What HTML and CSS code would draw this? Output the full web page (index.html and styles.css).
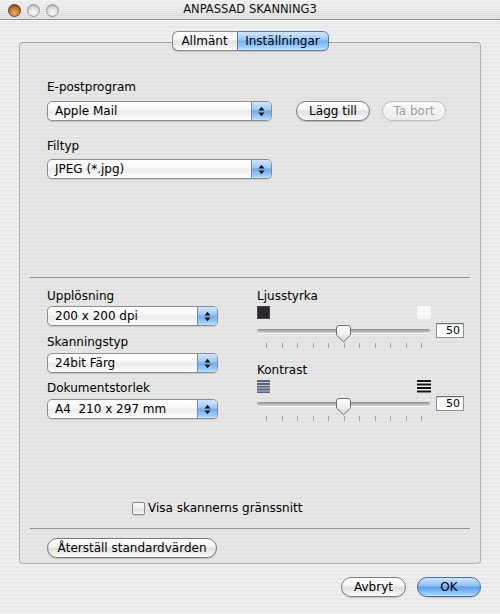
FILE: index.html
```html
<!DOCTYPE html>
<html>
<head>
<meta charset="utf-8">
<link rel="stylesheet" href="styles.css">
</head>
<body>
<div class="titlebar">
  <div class="lights">
    <span class="light close"></span>
    <span class="light"></span>
    <span class="light"></span>
  </div>
  <div class="title">ANPASSAD SKANNING3</div>
  <div></div>
</div>
<div class="main">
  <div class="tabs">
    <span class="tab first">Allmänt</span>
    <span class="tab sel">Inställningar</span>
  </div>
  <div class="box">
    <section class="top">
      <div class="label">E-postprogram</div>
      <div class="row">
        <div class="popup wide"><span class="txt">Apple Mail</span><span class="arrows"><svg width="7" height="11" viewBox="0 0 7 11"><path d="M0.5 4.5 L3.5 0.8 L6.5 4.5 Z M0.5 6.5 L3.5 10.2 L6.5 6.5 Z" fill="#111"/></svg></span></div>
        <button class="btn add">Lägg till</button>
        <button class="btn remove" disabled>Ta bort</button>
      </div>
      <div class="label filtyp">Filtyp</div>
      <div class="popup wide second"><span class="txt">JPEG (*.jpg)</span><span class="arrows"><svg width="7" height="11" viewBox="0 0 7 11"><path d="M0.5 4.5 L3.5 0.8 L6.5 4.5 Z M0.5 6.5 L3.5 10.2 L6.5 6.5 Z" fill="#111"/></svg></span></div>
    </section>
    <hr class="sep sep1">
    <section class="lower">
      <div class="col left">
        <div class="label">Upplösning</div>
        <div class="popup p1"><span class="txt">200 x 200 dpi</span><span class="arrows"><svg width="7" height="11" viewBox="0 0 7 11"><path d="M0.5 4.5 L3.5 0.8 L6.5 4.5 Z M0.5 6.5 L3.5 10.2 L6.5 6.5 Z" fill="#111"/></svg></span></div>
        <div class="label l2">Skanningstyp</div>
        <div class="popup p2"><span class="txt">24bit Färg</span><span class="arrows"><svg width="7" height="11" viewBox="0 0 7 11"><path d="M0.5 4.5 L3.5 0.8 L6.5 4.5 Z M0.5 6.5 L3.5 10.2 L6.5 6.5 Z" fill="#111"/></svg></span></div>
        <div class="label l3">Dokumentstorlek</div>
        <div class="popup p2"><span class="txt">A4&nbsp; 210 x 297 mm</span><span class="arrows"><svg width="7" height="11" viewBox="0 0 7 11"><path d="M0.5 4.5 L3.5 0.8 L6.5 4.5 Z M0.5 6.5 L3.5 10.2 L6.5 6.5 Z" fill="#111"/></svg></span></div>
      </div>
      <div class="col right">
        <div class="label">Ljusstyrka</div>
        <div class="icons">
          <span class="sq dark"></span>
          <span class="sq light-sq"></span>
        </div>
        <div class="srow s1">
          <div class="slider">
            <div class="track"></div>
            <svg class="thumb" width="17" height="19" viewBox="0 0 17 19"><defs><linearGradient id="tg" x1="0" y1="0" x2="0" y2="1"><stop offset="0" stop-color="#ffffff"/><stop offset="0.6" stop-color="#ececec"/><stop offset="1" stop-color="#d8d8d8"/></linearGradient></defs><path d="M1.5 4 Q1.5 1.5 4 1.5 H13 Q15.5 1.5 15.5 4 V11 L8.5 17.8 L1.5 11 Z" fill="url(#tg)" stroke="#6f6f6f" stroke-width="1"/></svg>
          </div>
          <div class="val">50</div>
        </div>
        <div class="ticks"><i></i><i></i><i></i><i></i><i></i><i></i><i></i><i></i><i></i><i></i><i></i></div>
        <div class="label l4">Kontrast</div>
        <div class="icons">
          <svg class="ci" width="13" height="13" viewBox="0 0 13 13"><rect width="13" height="13" fill="#c3c9d3"/><rect y="0" width="13" height="2" fill="#56647e"/><rect y="3" width="13" height="2" fill="#56647e"/><rect y="6" width="13" height="1.5" fill="#56647e"/><rect y="8.5" width="13" height="2" fill="#56647e"/><rect y="11.5" width="13" height="1.5" fill="#56647e"/></svg>
          <svg class="ci" width="14" height="13" viewBox="0 0 14 13"><rect width="14" height="13" fill="#f4f4f4"/><rect y="0" width="14" height="2" fill="#151515"/><rect y="3.5" width="14" height="2" fill="#151515"/><rect y="7" width="14" height="2" fill="#151515"/><rect y="10.5" width="14" height="2" fill="#151515"/></svg>
        </div>
        <div class="srow s2">
          <div class="slider">
            <div class="track"></div>
            <svg class="thumb" width="17" height="19" viewBox="0 0 17 19"><path d="M1.5 4 Q1.5 1.5 4 1.5 H13 Q15.5 1.5 15.5 4 V11 L8.5 17.8 L1.5 11 Z" fill="url(#tg)" stroke="#6f6f6f" stroke-width="1"/></svg>
          </div>
          <div class="val">50</div>
        </div>
        <div class="ticks"><i></i><i></i><i></i><i></i><i></i><i></i><i></i><i></i><i></i><i></i><i></i></div>
      </div>
    </section>
    <div class="check">
      <span class="cb"></span>
      <span class="cbtxt">Visa skannerns gränssnitt</span>
    </div>
    <hr class="sep sep2">
    <div class="reset-row">
      <button class="btn reset">Återställ standardvärden</button>
    </div>
  </div>
  <div class="footer">
    <button class="btn cancel">Avbryt</button>
    <button class="btn ok">OK</button>
  </div>
</div>
</body>
</html>
```

FILE: styles.css
```css
* { box-sizing: border-box; }
html, body { margin: 0; padding: 0; }
body {
  width: 500px;
  height: 614px;
  overflow: hidden;
  font-family: "DejaVu Sans", "Liberation Sans", sans-serif;
  font-size: 12px;
  color: #000;
  background: repeating-linear-gradient(to bottom, #efefef 0 2px, #e8e8e8 2px 4px);
}

/* title bar */
.titlebar {
  height: 20px;
  display: grid;
  grid-template-columns: 1fr auto 1fr;
  border-bottom: 1px solid #8e8e8e;
  background:
    repeating-linear-gradient(to bottom, rgba(255,255,255,0.35) 0 1px, rgba(255,255,255,0) 1px 2px),
    linear-gradient(to bottom, #ececec, #d9d9d9);
}
.lights {
  display: flex;
  gap: 6px;
  padding: 4px 0 0 8px;
  align-items: flex-start;
}
.light {
  width: 13px;
  height: 13px;
  border-radius: 50%;
  border: 1px solid #9c9c9c;
  background: radial-gradient(circle at 50% 70%, #fafafa 0, #dedede 55%, #c4c4c4 100%);
  box-shadow: inset 0 1px 1px rgba(0,0,0,0.2);
}
.light.close {
  border-color: #6b4220;
  background: radial-gradient(circle at 50% 75%, #f0b064 0, #c67a34 50%, #7a4a1e 100%);
}
.title {
  font-size: 11.5px;
  line-height: 19px;
  color: #111;
  letter-spacing: 0;
}

/* main */
.main {
  padding: 11px 19px 0 19px;
}
.tabs {
  display: flex;
  justify-content: center;
  height: 20px;
  position: relative;
  z-index: 1;
}
.tab {
  height: 20px;
  line-height: 18px;
  text-align: center;
  border: 1px solid #8a8a8a;
  background: linear-gradient(to bottom, #ffffff 0, #f4f4f4 45%, #e4e4e4 50%, #f2f2f2 85%, #ffffff 100%);
  box-shadow: 0 1px 1px rgba(0,0,0,0.15);
}
.tab.first {
  width: 65px;
  border-radius: 6px 0 0 6px;
  border-right: none;
}
.tab.sel {
  width: 92px;
  border-radius: 0 6px 6px 0;
  border-color: #5b7aa6;
  background: linear-gradient(to bottom, #d3e6fb 0, #9ac5f3 45%, #76b0ee 50%, #9fd0fb 85%, #cbe9ff 100%);
}

.box {
  margin-top: -9px;
  border: 1px solid #b3b3b3;
  border-top-color: #a2a2a2;
  border-radius: 4px;
  padding-bottom: 5px;
  background: repeating-linear-gradient(to bottom, #e7e7e7 0 2px, #e1e1e1 2px 4px);
}

.label {
  height: 16px;
  line-height: 16px;
  white-space: nowrap;
}

.top {
  padding: 36px 27px 0 27px;
}
.row {
  display: flex;
  align-items: center;
  margin-top: 6px;
  height: 20px;
}
.filtyp { margin-top: 17px; }
.popup.second { margin-top: 5px; }

/* popup */
.popup {
  height: 20px;
  display: flex;
  align-items: stretch;
  border: 1px solid #8d8d8d;
  border-radius: 5px;
  overflow: hidden;
  background: linear-gradient(to bottom, #ffffff 0, #f6f6f6 45%, #ebebeb 50%, #f7f7f7 85%, #ffffff 100%);
  box-shadow: 0 1px 1px rgba(0,0,0,0.12);
}
.popup.wide { width: 225px; }
.popup .txt {
  flex: 1;
  padding-left: 7px;
  line-height: 18px;
  white-space: nowrap;
}
.popup .arrows {
  width: 20px;
  display: flex;
  align-items: center;
  justify-content: center;
  border-left: 1px solid #6d8fbc;
  background: linear-gradient(to bottom, #d2e6fc 0, #9bc6f4 45%, #72aaea 50%, #98cbf9 85%, #c6e6ff 100%);
}

/* buttons */
.btn {
  height: 20px;
  padding: 0;
  font-family: "DejaVu Sans", "Liberation Sans", sans-serif;
  font-size: 12px;
  color: #000;
  border: 1px solid #7c7c7c;
  border-radius: 10px;
  background: linear-gradient(to bottom, #ffffff 0, #f3f3f3 45%, #dedede 50%, #f1f1f1 85%, #ffffff 100%);
  box-shadow: 0 1px 1px rgba(0,0,0,0.18);
  line-height: 18px;
}
.btn.add { width: 74px; margin-left: 24px; }
.btn.remove {
  width: 64px;
  margin-left: 12px;
  color: #9f9f9f;
  border-color: #bdbdbd;
  box-shadow: none;
  background: linear-gradient(to bottom, #fbfbfb 0, #f2f2f2 50%, #ececec 100%);
}

/* separators */
.sep {
  border: none;
  height: 1px;
  background: #959595;
  margin: 0 10px;
}
.sep1 { margin-top: 98px; }
.sep2 { margin-top: 12px; }

/* lower */
.lower {
  margin-top: 10px;
  padding: 0 27px;
  display: grid;
  grid-template-columns: 171px 208px;
  column-gap: 39px;
}
.popup.p1 { margin-top: 2px; }
.popup.p2 { margin-top: 3px; }
.l2 { margin-top: 8px; }
.l3 { margin-top: 7px; }

.icons {
  width: 174px;
  margin-top: 2px;
  height: 13px;
  display: flex;
  justify-content: space-between;
}
.sq { width: 13px; height: 13px; }
.sq.dark { background: #2b2631; border: 1px solid #4a4650; }
.sq.light-sq { width: 14px; background: #f8f8f8; }
.ci { display: block; }

.srow {
  display: flex;
  height: 20px;
}
.s1 { margin-top: 4px; }
.s2 { margin-top: 3px; }
.slider {
  position: relative;
  width: 173px;
  height: 20px;
}
.track {
  margin-top: 6px;
  height: 4px;
  border-radius: 2px;
  background: linear-gradient(to bottom, #8c8c8c, #b9b9b9 60%, #dcdcdc);
  box-shadow: 0 1px 0 rgba(255,255,255,0.6);
}
.thumb {
  position: absolute;
  top: 1px;
  left: 78px;
}
.val {
  width: 28px;
  height: 15px;
  margin-left: 6px;
  border: 1px solid #8f8f8f;
  border-top-color: #6e6e6e;
  background: #fff;
  box-shadow: inset 0 1px 1px rgba(0,0,0,0.15);
  font-size: 11px;
  line-height: 13px;
  text-align: right;
  padding-right: 3px;
}
.ticks {
  width: 173px;
  height: 5px;
  padding: 0 8px 0 9px;
  display: flex;
  justify-content: space-between;
}
.ticks i {
  display: block;
  width: 1px;
  height: 5px;
  background: #a2a2a2;
}
.l4 { margin-top: 14px; }

/* checkbox */
.check {
  margin-top: 79px;
  height: 16px;
  display: flex;
  align-items: center;
  padding-left: 112px;
}
.cb {
  width: 13px;
  height: 13px;
  border: 1px solid #8a8a8a;
  border-radius: 2px;
  background: linear-gradient(to bottom, #ffffff, #ececec 50%, #dcdcdc 51%, #f6f6f6);
  box-shadow: 0 1px 1px rgba(0,0,0,0.12);
}
.cbtxt {
  margin-left: 3px;
  white-space: nowrap;
}

.reset-row {
  margin-top: 9px;
  padding-left: 27px;
}
.btn.reset { width: 170px; }

.footer {
  margin-top: 13px;
  display: flex;
  justify-content: flex-end;
  gap: 11px;
}
.btn.cancel { width: 65px; }
.btn.ok {
  width: 64px;
  border-color: #4b6f9f;
  background: linear-gradient(to bottom, #cfe4fc 0, #8dbef3 45%, #5c9de9 50%, #8ec8fb 85%, #c4e6ff 100%);
}
```
